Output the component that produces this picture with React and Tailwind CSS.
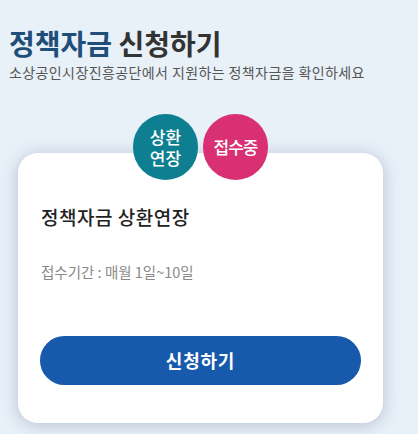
export default function App() {
  const font = { fontFamily: '"Noto Sans CJK KR", "Noto Sans", sans-serif' };
  return (
    <div className="min-h-[434px] w-full bg-[#e8f0f8] px-[9px] pt-[24px] pb-[11px]" style={font}>
      <h1 className="text-[28px] font-bold leading-[38px] text-[#333333]">
        <span className="text-[#1f4e79]">정책자금</span> 신청하기
      </h1>
      <p className="text-[14px] leading-[20px] tracking-[0.4px] text-[#555555]">
        소상공인시장진흥공단에서 지원하는 정책자금을 확인하세요
      </p>
      <div className="relative mt-[32px] w-[365px] ml-[9px]">
        <div className="relative z-10 flex justify-center gap-[5px]">
          <div className="flex h-[66px] w-[65px] flex-col items-center justify-center rounded-full bg-[#0d7f91] text-center text-[17px] font-medium leading-[21px] text-white">
            <span>상환</span>
            <span>연장</span>
          </div>
          <div className="flex h-[66px] w-[65px] items-center justify-center rounded-full bg-[#d92f73] text-[17px] font-medium tracking-[-1px] text-white">
            접수중
          </div>
        </div>
        <div className="-mt-[27px] w-[365px] rounded-[20px] bg-white px-[22px] pt-[51px] pb-[38px] shadow-[0_2px_16px_rgba(90,110,140,0.35)]">
          <h2 className="pl-[1px] text-[19px] font-medium leading-[26px] tracking-[0.5px] text-[#222222]">
            정책자금 상환연장
          </h2>
          <p className="mt-[32px] pl-[1px] text-[14.5px] leading-[20px] text-[#8a8a8a]">
            접수기간 : 매월 1일~10일
          </p>
          <button className="mt-[54px] flex h-[49px] w-full items-center justify-center rounded-full bg-[#1759ab] text-[18px] font-bold tracking-[0.8px] text-white">
            신청하기
          </button>
        </div>
      </div>
    </div>
  );
}
